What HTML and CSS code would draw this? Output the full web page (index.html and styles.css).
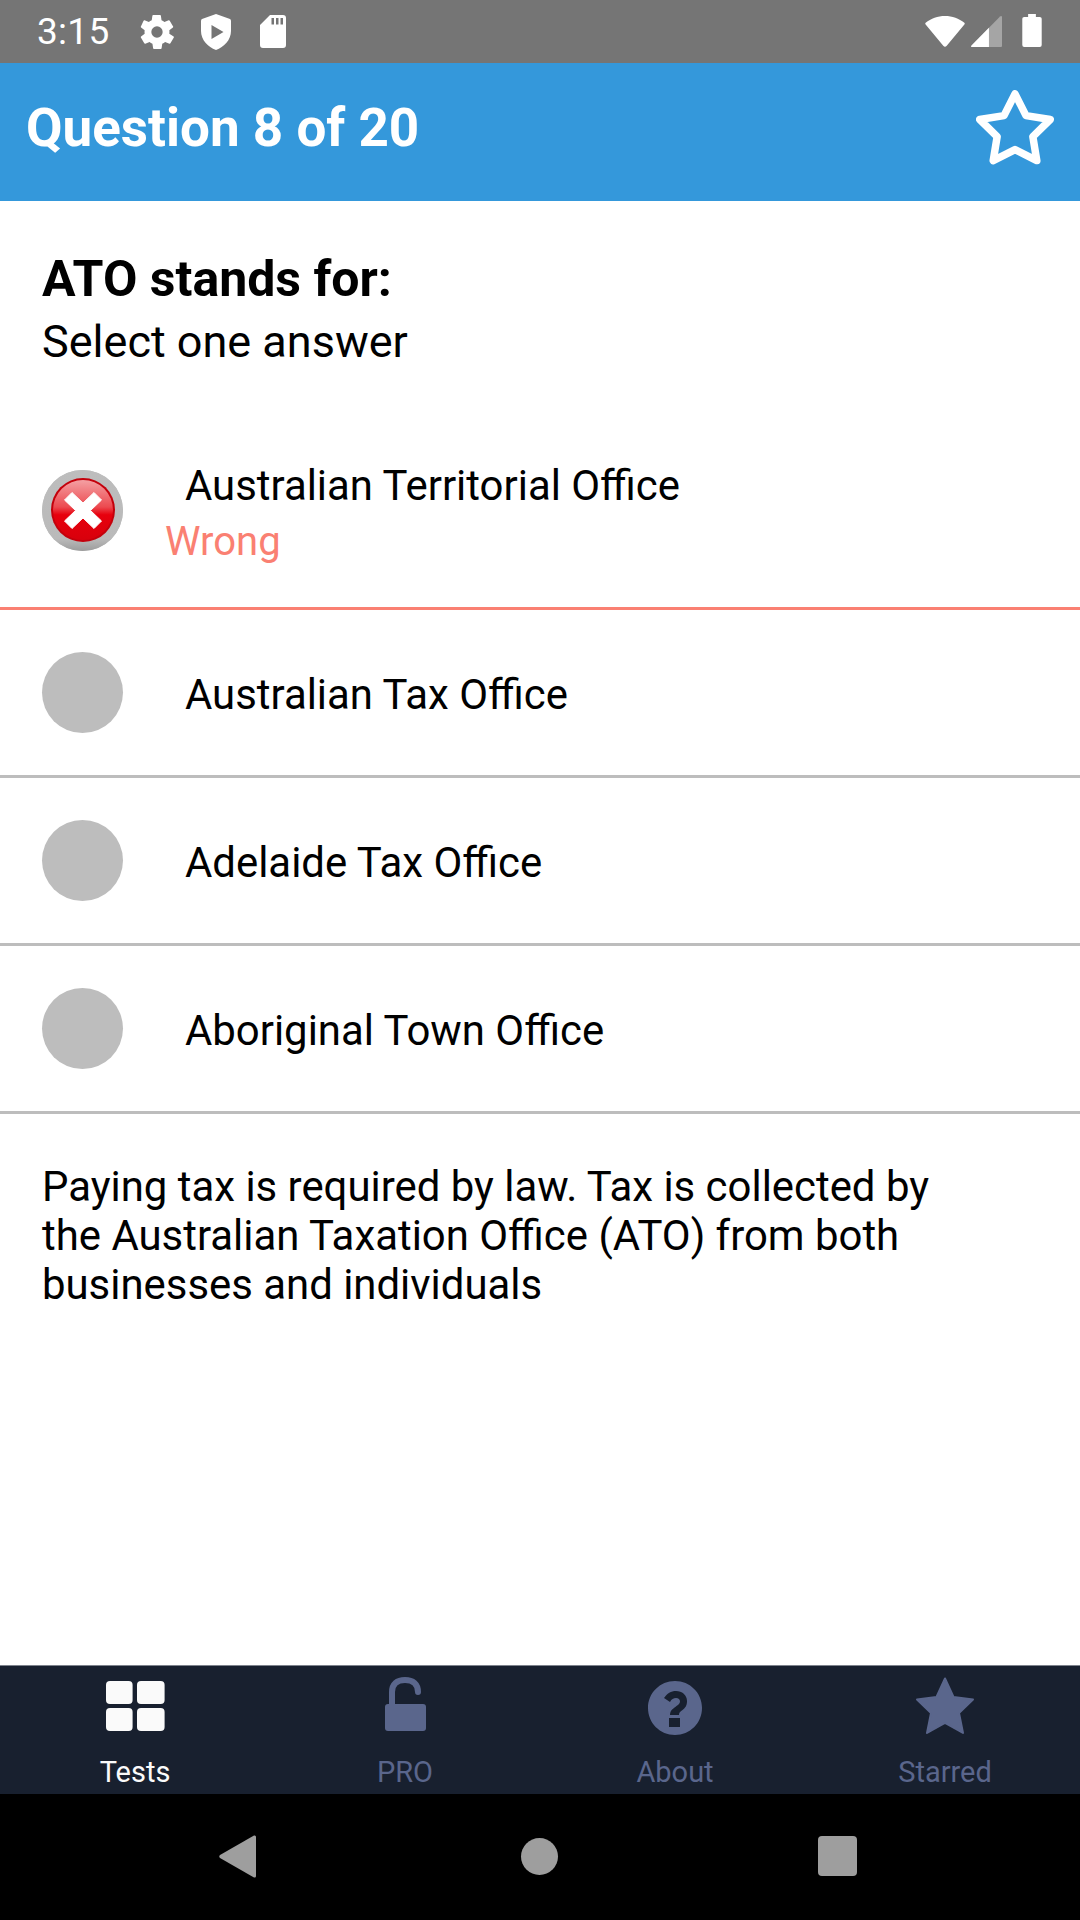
FILE: index.html
```html
<!DOCTYPE html>
<html lang="en">
<head>
<meta charset="utf-8">
<title>Question 8 of 20</title>
<link rel="stylesheet" href="styles.css">
</head>
<body>
<div class="screen">
  <div class="status">
    <span class="time">3:15</span>
    <svg class="si gear" viewBox="0 0 24 24"><path d="M19.4 13c.04-.33.06-.66.06-1s-.02-.67-.07-1l2.16-1.65a.5.5 0 0 0 .12-.64l-2.05-3.52a.5.5 0 0 0-.62-.22l-2.55 1a7.5 7.5 0 0 0-1.73-1l-.39-2.67a.5.5 0 0 0-.5-.43h-4.1a.5.5 0 0 0-.5.43l-.39 2.67c-.62.26-1.2.6-1.73 1l-2.55-1a.5.5 0 0 0-.62.22L2.33 8.71a.5.5 0 0 0 .12.64L4.6 11c-.05.33-.07.67-.07 1s.02.67.07 1l-2.16 1.65a.5.5 0 0 0-.12.64l2.05 3.52c.13.22.39.3.62.22l2.55-1c.53.4 1.11.74 1.73 1l.39 2.67c.05.25.26.43.5.43h4.1c.25 0 .46-.18.5-.43l.39-2.67c.62-.26 1.2-.6 1.73-1l2.55 1c.23.08.49 0 .62-.22l2.05-3.52a.5.5 0 0 0-.12-.64zM12 15.4a3.4 3.4 0 1 1 0-6.8 3.4 3.4 0 0 1 0 6.8z" fill="#fff"/></svg>
    <svg class="si shield" viewBox="0 0 30 36"><path fill="#fff" fill-rule="evenodd" d="M15 0 L29 5 Q30 5.400 30 7 V17 C30 26 23 33 15 36 C7 33 0 26 0 17 V7 Q0 5.400 1 5 Z M10.500 11 V25 L22.500 18 Z"/></svg>
    <svg class="si sd" viewBox="0 0 26 33"><path fill="#fff" fill-rule="evenodd" d="M10 0 H23 Q26 0 26 3 V30 Q26 33 23 33 H3 Q0 33 0 30 V10 Z M11.500 3 V9.500 H14 V3 Z M16 3 V9.500 H18.500 V3 Z M20.500 3 V9.500 H23 V3 Z"/></svg>
    <span class="spacer"></span>
    <svg class="wifi" viewBox="0 0 41 32"><path fill="#fff" d="M20.500 0 C28 0 35 2.500 40.500 7 Q41.300 7.800 40.500 8.700 L22.300 30.800 Q20.500 32.600 18.700 30.800 L.5 8.700 Q-.3 7.800 .5 7 C6 2.500 13 0 20.500 0 Z"/></svg>
    <svg class="signal" viewBox="0 0 32 32"><path fill="#fff" fill-opacity=".35" d="M31 0 Q32 0 32 1 V31 Q32 32 31 32 H1 Q-.5 32 .5 30.500 L30 .5 Q30.500 0 31 0 Z"/><path fill="#fff" d="M18.500 12 V32 H1 Q-.5 32 .5 30.500 Z"/></svg>
    <svg class="battery" viewBox="0 0 20 34"><path fill="#fff" d="M6 0 H14 V3 H18 Q20 3 20 5 V32 Q20 34 18 34 H2 Q0 34 0 32 V5 Q0 3 2 3 H6 Z"/></svg>
  </div>

  <header class="appbar">
    <h1 class="title">Question 8 of 20</h1>
    <svg class="star-btn" viewBox="3.500 2.500 73 70"><path d="M40 6 L50.300 26.400 L73 30 L56.700 46 L60.400 68.500 L40 58.200 L19.600 68.500 L23.300 46 L7 30 L29.700 26.400 Z" fill="none" stroke="#fff" stroke-width="7" stroke-linejoin="round"/></svg>
  </header>

  <main class="content">
    <section class="question">
      <p class="q-title">ATO stands for:</p>
      <p class="q-hint">Select one answer</p>
    </section>

    <div class="option option-wrong">
      <span class="mark mark-wrong">
        <svg viewBox="0 0 81 81">
          <defs>
            <linearGradient id="red" x1="0" y1="0" x2="0" y2="1">
              <stop offset="0" stop-color="#f4a0a3"/>
              <stop offset=".45" stop-color="#ec4a50"/>
              <stop offset=".58" stop-color="#e7000d"/>
              <stop offset="1" stop-color="#d8000c"/>
            </linearGradient>
            <linearGradient id="shade" x1="0" y1="0" x2="0" y2="1">
              <stop offset="0" stop-color="#bdbdbd"/>
              <stop offset=".85" stop-color="#bababa"/>
              <stop offset="1" stop-color="#9c9c9c"/>
            </linearGradient>
          </defs>
          <circle cx="40.500" cy="40.500" r="40.500" fill="url(#shade)"/>
          <circle cx="41" cy="40" r="32" fill="#c4000b"/>
          <circle cx="41" cy="40" r="30" fill="url(#red)"/>
          <path d="M30 22.500 L41 33 L52 22.500 L59.500 30 L48.500 40.500 L59.500 51 L52 58.500 L41 48 L30 58.500 L22.500 51 L33.500 40.500 L22.500 30 Z" fill="#fff" stroke="#fff" stroke-width="1" stroke-linejoin="round"/>
        </svg>
      </span>
      <div class="opt-body">
        <span class="opt-text">Australian Territorial Office</span>
        <span class="opt-status">Wrong</span>
      </div>
    </div>
    <div class="option">
      <span class="mark"></span>
      <div class="opt-body"><span class="opt-text">Australian Tax Office</span></div>
    </div>
    <div class="option">
      <span class="mark"></span>
      <div class="opt-body"><span class="opt-text">Adelaide Tax Office</span></div>
    </div>
    <div class="option">
      <span class="mark"></span>
      <div class="opt-body"><span class="opt-text">Aboriginal Town Office</span></div>
    </div>

    <p class="explain">Paying tax is required by law. Tax is collected by the Australian Taxation Office (ATO) from both businesses and individuals</p>
  </main>

  <nav class="tabs">
    <div class="tab tab-active">
      <svg class="tab-icon" viewBox="0 0 60 60"><g fill="#fafafa"><rect x="1" y="4" width="26.600" height="23" rx="4"/><rect x="32" y="4" width="27.600" height="23" rx="4"/><rect x="1" y="31" width="26.600" height="23" rx="4"/><rect x="32" y="31" width="27.600" height="23" rx="4"/></g></svg>
      <span>Tests</span>
    </div>
    <div class="tab">
      <svg class="tab-icon" viewBox="0 0 60 60"><path d="M17 28 V15 C17 7 22 3 30 3 C38 3 43 7 43 15 V15" fill="none" stroke="#5a668c" stroke-width="6" stroke-linecap="round"/><rect x="10" y="27" width="41" height="27" rx="3" fill="#5a668c"/></svg>
      <span>PRO</span>
    </div>
    <div class="tab">
      <svg class="tab-icon" viewBox="0 0 60 60"><path fill="#5a668c" fill-rule="evenodd" d="M30 4 C45 4 57 16 57 31 C57 46 45 58 30 58 C15 58 3 46 3 31 C3 16 15 4 30 4 Z M19 21 L25 25 C26.500 22 28.500 21 31 21 C33.500 21 35 22.500 35 24.500 C35 26.500 33.500 27.500 31.500 29 C28.500 31.500 25 33 25 38 H34 C34 35.500 35 35 37.500 33 C40 31 42 29 42 24 C42 18 37 14 31 14 C26 14 22 16.500 19 21 Z M24 41 V50 H35 V41 Z"/></svg>
      <span>About</span>
    </div>
    <div class="tab">
      <svg class="tab-icon" viewBox="0 0 60 60"><path fill="#5a668c" stroke="#5a668c" stroke-width="2" stroke-linejoin="round" d="M30 1.500 L38.500 20 L58 22.500 L44 36 L48 56 L30 46 L12 56 L16 36 L2 22.500 L21.500 20 Z"/></svg>
      <span>Starred</span>
    </div>
  </nav>

  <div class="navbar">
    <svg class="nav-back" viewBox="0 0 37 43"><path fill="#9e9e9e" d="M35 .5 Q37 0 37 2 V41 Q37 43 35 42.500 L1 23 Q-.5 21.500 1 20 Z"/></svg>
    <span class="nav-home"></span>
    <span class="nav-recent"></span>
  </div>
</div>
</body>
</html>
```
FILE: styles.css
```css
* { box-sizing: border-box; }
html, body { margin: 0; padding: 0; background: #fff; }
body { font-family: Roboto, "Noto Sans", sans-serif; color: #000; }
p, h1 { margin: 0; }

.screen { width: 1080px; height: 1920px; display: flex; flex-direction: column; overflow: hidden; }

.status { height: 63px; background: #757575; display: flex; align-items: center; padding: 0 38px 0 37px; flex: none; }
.time { font-size: 37px; color: #fff; letter-spacing: .3px; width: 100px; flex: none; }
.si { display: block; flex: none; }
.gear { width: 40px; height: 40px; margin-right: 24px; }
.shield { width: 30px; height: 36px; margin-right: 29px; }
.sd { width: 26px; height: 33px; }
.spacer { flex: 1; }
.wifi { width: 40px; height: 31px; margin-right: 6px; margin-top: -1px; }
.signal { width: 31px; height: 31px; margin-right: 20px; }
.battery { width: 20px; height: 33px; margin-top: -2px; }

.appbar { height: 138px; background: #3498db; display: flex; align-items: center; justify-content: space-between; padding: 0 26px; flex: none; }
.title { font-size: 53px; font-weight: 700; color: #fff; line-height: 1; margin-top: -8px; }
.star-btn { width: 78px; height: 75px; margin-top: -9px; }

.content { flex: 1; display: flex; flex-direction: column; }
.question { padding: 50px 42px 0; height: 225px; }
.q-title { font-size: 50px; font-weight: 700; line-height: 56px; }
.q-hint { font-size: 45px; line-height: 50px; margin-top: 10px; }

.option { display: flex; align-items: center; height: 168px; border-bottom: 3px solid #bdbdbd; padding: 3px 0 0 42px; flex: none; }
.option-wrong { height: 184px; border-bottom-color: #fa8072; padding: 0 0 7px 42px; }
.mark { width: 81px; height: 81px; border-radius: 50%; background: #bdbdbd; flex: none; display: block; margin-top: -3px; }
.option-wrong .mark { margin-top: -5px; }
.mark svg { display: block; width: 81px; height: 81px; }
.opt-body { display: flex; flex-direction: column; padding: 2px 0 0 62px; }
.option-wrong .opt-body { padding-top: 0; }
.opt-text { font-size: 41.900px; line-height: 50px; }
.opt-status { font-size: 40px; line-height: 46px; color: #fa8072; margin-left: -20px; margin-top: 8px; }

.explain { font-size: 41.900px; line-height: 49px; padding: 48px 42px 0; width: 985px; }

.tabs { height: 129px; background: #18202f; border-top: 1px solid #7d828c; display: flex; flex: none; }
.tab { width: 25%; display: flex; flex-direction: column; align-items: center; color: #5a668c; font-size: 29px; }
.tab-icon { display: block; width: 60px; height: 60px; margin-top: 11px; }
.tab span { line-height: 32px; margin-top: 19px; }
.tab-active { color: #fafafa; }

.navbar { height: 126px; background: #000; display: flex; align-items: center; flex: none; padding-bottom: 2px; }
.nav-back { width: 37px; height: 43px; margin-left: 219px; display: block; }
.nav-home { width: 37px; height: 37px; border-radius: 50%; background: #9e9e9e; margin-left: 265px; }
.nav-recent { width: 39px; height: 40px; border-radius: 4px; background: #9e9e9e; margin-left: 260px; }
```
